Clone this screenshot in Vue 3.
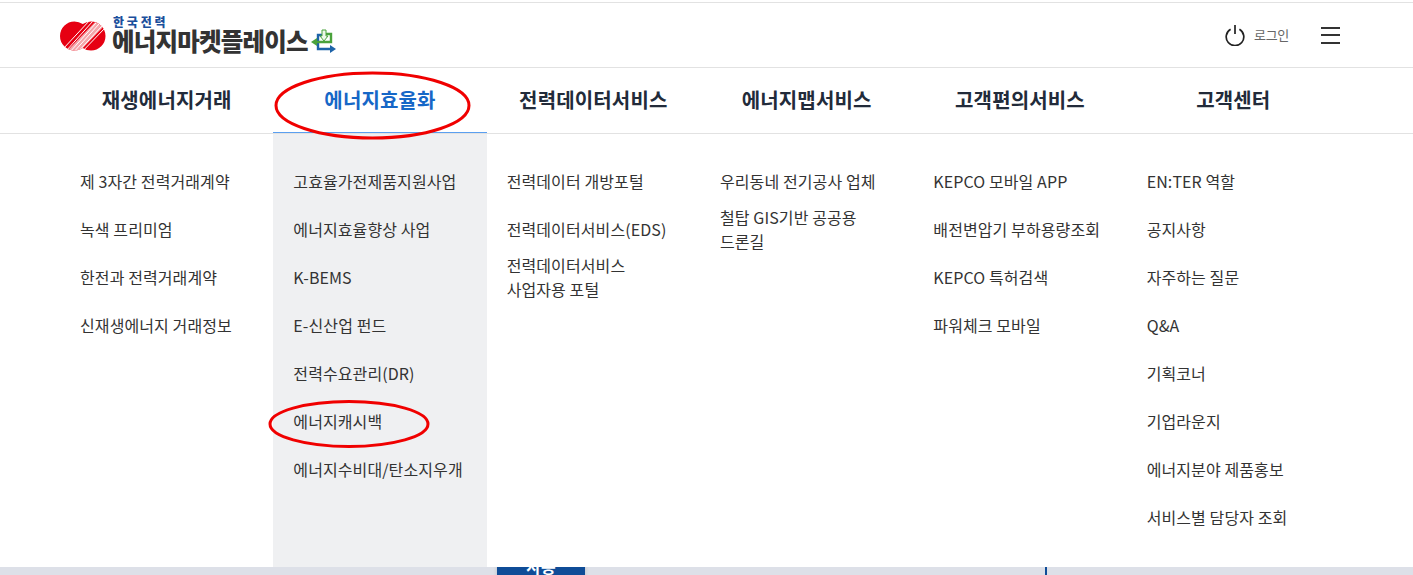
<script setup>
const nav = ['재생에너지거래', '에너지효율화', '전력데이터서비스', '에너지맵서비스', '고객편의서비스', '고객센터']
const cols = [
  { items: ['제 3자간 전력거래계약', '녹색 프리미엄', '한전과 전력거래계약', '신재생에너지 거래정보'] },
  { active: true, items: ['고효율가전제품지원사업', '에너지효율향상 사업', 'K-BEMS', 'E-신산업 펀드', '전력수요관리(DR)', '에너지캐시백', '에너지수비대/탄소지우개'] },
  { items: ['전력데이터 개방포털', '전력데이터서비스(EDS)', '전력데이터서비스\n사업자용 포털'] },
  { items: ['우리동네 전기공사 업체', '철탑 GIS기반 공공용\n드론길'] },
  { items: ['KEPCO 모바일 APP', '배전변압기 부하용량조회', 'KEPCO 특허검색', '파워체크 모바일'] },
  { items: ['EN:TER 역할', '공지사항', '자주하는 질문', 'Q&A', '기획코너', '기업라운지', '에너지분야 제품홍보', '서비스별 담당자 조회'] }
]
</script>

<template>
  <div class="page">
    <header class="top">
      <div class="logo">
        <svg class="mark" width="46" height="30" viewBox="0 0 46 30">
          <defs>
            <clipPath id="blob">
              <circle cx="14.5" cy="15" r="14.500" />
              <circle cx="31" cy="15" r="14.500" />
            </clipPath>
          </defs>
          <g clip-path="url(#blob)">
            <rect width="46" height="30" fill="#e60012" />
            <path d="M6 31 37-1 46 3 17 33Z" fill="#f4a6aa" />
            <g stroke="#fff" stroke-width="1">
              <path d="M3 28 30-1M6 30 33 0M9 32 36 2M12 33 39 3M15 34 42 5M18 35 45 7" />
            </g>
          </g>
        </svg>
        <div class="logo-text">
          <span class="kepco">한국전력</span>
          <span class="market">에너지마켓플레이스</span>
        </div>
        <svg class="emblem" width="25" height="24" viewBox="0 0 25 24">
          <path d="M11 6H7v14h13" fill="none" stroke="#1d63a8" stroke-width="2.400" />
          <path d="M19 16l6 4-6 4z" fill="#1d63a8" />
          <path d="M15 5h5v8H5" fill="none" stroke="#4aa23c" stroke-width="2.400" />
          <path d="M6 9 0 13l6 4z" fill="#4aa23c" />
          <path d="M11 1h4v6h2l-4 5-4-5h2z" fill="#eef7ea" stroke="#4aa23c" stroke-width="1" />
        </svg>
      </div>
      <div class="tools">
        <svg class="power" width="20" height="22" viewBox="0 0 20 22">
          <path d="M5.600 5.200a8.800 8.800 0 1 0 8.800 0M10 1v9" fill="none" stroke="#222" stroke-width="1.700" />
        </svg>
        <span class="login">로그인</span>
        <span class="burger"><i></i><i></i><i></i></span>
      </div>
    </header>

    <nav class="nav">
      <div class="grid">
        <a v-for="(n, i) in nav" :key="n" class="nav-item" :class="{ on: i === 1 }">{{ n }}</a>
      </div>
    </nav>

    <section class="mega">
      <div class="grid tall">
        <ul v-for="(c, i) in cols" :key="i" class="col" :class="{ active: c.active }">
          <li v-for="t in c.items" :key="t" :class="{ two: t.includes('\n') }">{{ t }}</li>
        </ul>
      </div>
    </section>

    <footer class="strip">
      <span class="btn">사용</span>
      <span class="rule"></span>
    </footer>

    <svg class="marks" width="1413" height="575" viewBox="0 0 1413 575">
      <ellipse cx="372.5" cy="105.5" rx="96.500" ry="32.500" />
      <ellipse cx="349" cy="424" rx="79" ry="22.500" />
    </svg>
  </div>
</template>

<style>
html, body { margin: 0; background: #fff; overflow: hidden; }
</style>

<style scoped>
.page {
  position: relative;
  width: 1413px;
  height: 575px;
  overflow: hidden;
  font-family: "Noto Sans CJK KR", "Noto Sans", sans-serif;
  color: #333;
  background: #fff;
}
.top {
  box-sizing: border-box;
  height: 66px;
  border-top: 1px solid #e2e2e2;
  border-bottom: 1px solid #e2e2e2;
  margin-top: 2px;
  padding: 0 73px 0 60px;
  display: flex;
  align-items: center;
  justify-content: space-between;
}
.logo { display: flex; align-items: center; }
.mark { margin-top: 1px; }
.logo-text { display: flex; flex-direction: column; margin-left: 6px; }
.kepco {
  color: #1b4f9c;
  font-size: 12px;
  font-weight: 900;
  line-height: 12px;
  margin-left: 1px;
  letter-spacing: 2.800px;
}
.market {
  color: #333;
  font-size: 24.500px;
  font-weight: 900;
  line-height: 26px;
  letter-spacing: -.8px;
}
.emblem { margin: 11px 0 0 3px; }
.tools { display: flex; align-items: center; }
.power { margin-right: 9px; }
.login { font-size: 13px; color: #666; letter-spacing: -.3px; margin-right: 32px; position: relative; top: -1px; }
.burger { width: 19px; height: 17px; display: flex; flex-direction: column; justify-content: space-between; }
.burger i { display: block; height: 2px; background: #333; }

.grid {
  width: 1280px;
  margin-left: 60px;
  display: grid;
  grid-template-columns: repeat(6, 1fr);
}
.nav {
  height: 66px;
  box-sizing: border-box;
  border-bottom: 1px solid #e2e2e2;
}
.nav-item {
  height: 65px;
  box-sizing: border-box;
  padding-bottom: 2px;
  display: flex;
  align-items: center;
  justify-content: center;
  font-size: 20px;
  font-weight: 700;
  color: #222b3a;
  letter-spacing: .15px;
  position: relative;
}
.nav-item.on { color: #1667c7; }
.nav-item.on::after {
  content: "";
  position: absolute;
  left: 0;
  right: 0;
  bottom: 0;
  height: 1px;
  background: #5a9ff0;
}
.mega { height: 433px; }
.tall { height: 100%; }
.col {
  list-style: none;
  margin: 0;
  padding: 35px 0 0 20px;
}
.col.active { background: #eff0f2; }
.col li {
  font-size: 16px;
  line-height: 24px;
  height: 48px;
  letter-spacing: .1px;
  color: #333;
  white-space: pre-line;
}
.col li.two { height: 48px; margin-top: -12px; margin-bottom: 12px; }
.strip {
  height: 8px;
  background: #dde0e8;
  position: relative;
  overflow: hidden;
}
.btn {
  position: absolute;
  left: 497px;
  top: 0;
  width: 88px;
  height: 30px;
  background: #0f4c97;
  color: #fff;
  font-size: 16px;
  font-weight: 700;
  text-align: center;
  line-height: 14px;
  margin-top: -8px;
  box-shadow: 0 0 4px rgba(0, 0, 0, .14);
}
.rule { position: absolute; left: 1045px; top: 0; width: 2px; height: 8px; background: #0f4c97; }
.marks { position: absolute; left: 0; top: 0; pointer-events: none; }
.marks ellipse { fill: none; stroke: #f00000; stroke-width: 3; }
</style>
